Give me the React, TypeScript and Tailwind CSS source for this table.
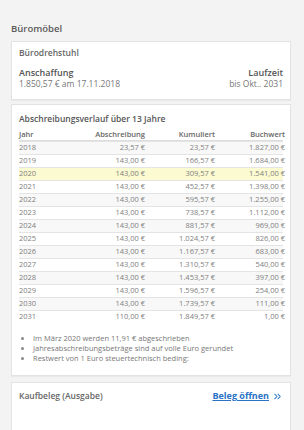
import React from "react";
import { ChevronsRight } from "lucide-react";

const rows: [string, string, string, string][] = [
  ["2018", "23,57 €", "23,57 €", "1.827,00 €"],
  ["2019", "143,00 €", "166,57 €", "1.684,00 €"],
  ["2020", "143,00 €", "309,57 €", "1.541,00 €"],
  ["2021", "143,00 €", "452,57 €", "1.398,00 €"],
  ["2022", "143,00 €", "595,57 €", "1.255,00 €"],
  ["2023", "143,00 €", "738,57 €", "1.112,00 €"],
  ["2024", "143,00 €", "881,57 €", "969,00 €"],
  ["2025", "143,00 €", "1.024,57 €", "826,00 €"],
  ["2026", "143,00 €", "1.167,57 €", "683,00 €"],
  ["2027", "143,00 €", "1.310,57 €", "540,00 €"],
  ["2028", "143,00 €", "1.453,57 €", "397,00 €"],
  ["2029", "143,00 €", "1.596,57 €", "254,00 €"],
  ["2030", "143,00 €", "1.739,57 €", "111,00 €"],
  ["2031", "110,00 €", "1.849,57 €", "1,00 €"],
];

export default function App() {
  return (
    <div
      className="w-[304px] h-[430px] overflow-hidden bg-[#f3f3f3] text-[#777]"
      style={{ fontFamily: '"Open Sans", "Noto Sans", sans-serif' }}
    >
      <div className="pt-[23px] pl-[11px] text-[9.5px] leading-[12px] font-semibold text-[#5a5a5a]">
        Büromöbel
      </div>

      <div className="mt-[6px] ml-[11px] w-[280px] bg-white border border-[#e3e3e3] shadow-[0_1px_1px_rgba(0,0,0,0.04)] px-[7px] pt-[5px] pb-[10px]">
        <div className="text-[8.5px] leading-[12px] font-semibold text-[#666]">Bürodrehstuhl</div>
        <div className="mt-[8px] flex justify-between">
          <div>
            <div className="text-[9px] leading-[11px] font-semibold text-[#555]">Anschaffung</div>
            <div className="text-[8.5px] leading-[11px] text-[#777]">1.850,57 € am 17.11.2018</div>
          </div>
          <div className="text-right">
            <div className="text-[9px] leading-[11px] font-semibold text-[#555]">Laufzeit</div>
            <div className="text-[8.5px] leading-[11px] text-[#777]">bis Okt.. 2031</div>
          </div>
        </div>
      </div>

      <div className="mt-[4px] ml-[11px] w-[280px] bg-white border border-[#e3e3e3] shadow-[0_1px_1px_rgba(0,0,0,0.04)] px-[7px] pt-[8px] pb-[12px]">
        <div className="text-[8.5px] leading-[12px] font-semibold text-[#555]">
          Abschreibungsverlauf über 13 Jahre
        </div>
        <div className="mt-[4px] text-[7.5px]">
          <div className="grid grid-cols-[61px_65px_70px_70px] h-[12px] items-center border-b border-[#ddd] font-semibold text-[#666]">
            <div>Jahr</div>
            <div className="text-right">Abschreibung</div>
            <div className="text-right">Kumuliert</div>
            <div className="text-right">Buchwert</div>
          </div>
          {rows.map((r, i) => (
            <div
              key={r[0]}
              className={
                "grid grid-cols-[61px_65px_70px_70px] h-[13px] items-center border-t border-[#e4e4e4] text-[#808080] " +
                (r[0] === "2020" ? "bg-[#fcfad0]" : i % 2 === 0 ? "bg-[#f8f8f8]" : "bg-white")
              }
            >
              <div>{r[0]}</div>
              <div className="text-right">{r[1]}</div>
              <div className="text-right">{r[2]}</div>
              <div className="text-right">{r[3]}</div>
            </div>
          ))}
        </div>
        <ul className="mt-[10px] pl-[14px] list-disc text-[7.5px] leading-[10px] text-[#777] marker:text-[#888]">
          <li>Im März 2020 werden 11,91 € abgeschrieben</li>
          <li>Jahresabschreibungsbeträge sind auf volle Euro gerundet</li>
          <li>Restwert von 1 Euro steuertechnisch beding:</li>
        </ul>
      </div>

      <div className="mt-[6px] ml-[11px] w-[280px] h-[60px] bg-white border border-[#e3e3e3] px-[7px] pt-[7px]">
        <div className="flex justify-between items-center">
          <div className="text-[8.5px] leading-[12px] font-semibold text-[#666]">Kaufbeleg (Ausgabe)</div>
          <a className="flex items-center gap-[3px] text-[9px] leading-[12px] font-bold text-[#2a73c5] cursor-pointer">
            <span className="underline">Beleg öffnen</span>
            <ChevronsRight size={11} strokeWidth={2.2} />
          </a>
        </div>
      </div>
    </div>
  );
}
